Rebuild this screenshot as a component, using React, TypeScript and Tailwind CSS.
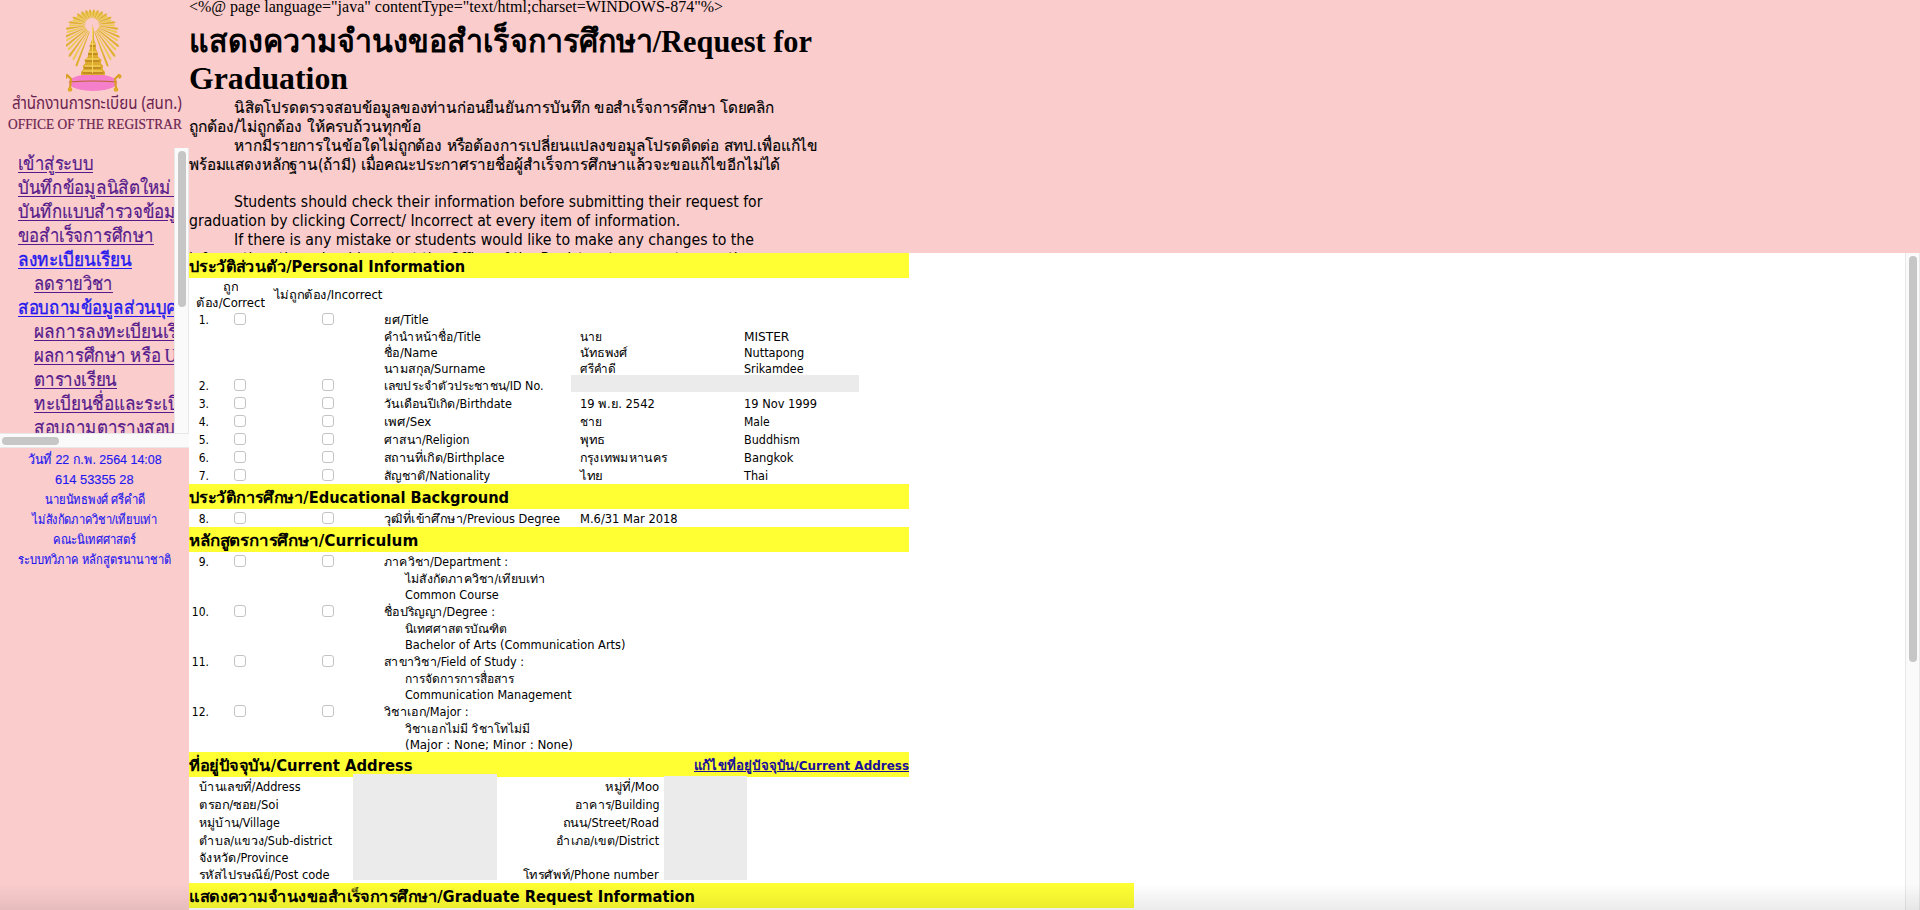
import { useLayoutEffect, useRef, useState, type ReactNode } from "react";

const tahoma = "font-['DejaVu_Sans_Condensed','DejaVu_Sans',sans-serif]";

type TProps = { w: number; children: ReactNode; className?: string; right?: boolean };

/* One line of text, condensed or widened to an exact width. */
function T({ w, children, className = "", right = false }: TProps) {
  const ref = useRef<HTMLSpanElement>(null);
  const [k, setK] = useState(1);
  useLayoutEffect(() => {
    if (ref.current) setK(w / ref.current.offsetWidth);
  }, [w]);
  return (
    <span className={`flex shrink-0 whitespace-nowrap ${right ? "justify-end" : ""} ${className}`} style={{ width: w }}>
      <span ref={ref} className={`shrink-0 ${right ? "origin-right" : "origin-left"}`} style={{ transform: `scaleX(${k})` }}>
        {children}
      </span>
    </span>
  );
}

/* Table text, which sits slightly below the middle of its row. */
function L(props: TProps) {
  return <T {...props} className="pt-[2px]" />;
}

const rays = Array.from({ length: 43 }, (_, i) => -159 + (i * 318) / 42);

function Emblem() {
  return (
    <svg width="58" height="84" viewBox="0 0 58 84" className="mt-[9px]">
      {rays.map((a, i) => {
        const len = 15 + 29 * Math.pow(Math.abs(a) / 159, 2) + (i % 2 ? -1 : 1);
        return (
          <polygon key={a} points={`-0.35,-7 0.35,-7 1.1,${-len + 2} 0,${-len} -1.1,${-len + 2}`} fill={i % 2 ? "#ecca55" : "#e0b030"} transform={`translate(26 16) rotate(${a})`} />
        );
      })}
      <ellipse cx="27" cy="73.5" rx="24" ry="8.5" fill="#f57fca" />
      <path d="M3 73Q27 71 51 73" stroke="#b8672e" strokeWidth="1.2" fill="none" />
      <path d="M26.5 15l1 5 .6 11 1.6 4 .3 5 1.8 4 .4 4 3.4 3-1 3 2.6 3-.6 3 2.4 3v3H15v-3l2.400-3-.6-3 2.600-3-1-3 3.400-3 .4-4 1.800-4 .3-5 1.600-4 .6-11z" fill="#dfab2c" />
      <path d="M23.500 37h6M22 45h9.500M19.500 52h14M18 59h17M16.500 64h21" stroke="#a06a16" strokeWidth="0.9" />
      <path d="M24 35h5M22.500 43h8M20 50h13M18.500 57h16M17 62h19" stroke="#f7db6b" strokeWidth="1.2" />
      <path d="M26.500 18v46" stroke="#f5d45a" strokeWidth="1" />
      <path d="M1 69q-3-2 0-3l4 4-1 9M53 69q3-2 0-3l-4 4 1 9" stroke="#dba023" strokeWidth="2.2" fill="none" />
      <circle cx="4" cy="80.500" r="2.300" fill="#e0a928" />
      <circle cx="50" cy="80.500" r="2.300" fill="#e0a928" />
    </svg>
  );
}

const nav: { text: string; w: number; sub?: boolean; blue?: boolean }[] = [
  { text: "เข้าสู่ระบบ", w: 75 },
  { text: "บันทึกข้อมูลนิสิตใหม่ และ", w: 188 },
  { text: "บันทึกแบบสำรวจข้อมูลนิสิต", w: 201 },
  { text: "ขอสำเร็จการศึกษา", w: 136 },
  { text: "ลงทะเบียนเรียน", w: 114, blue: true },
  { text: "ลดรายวิชา", w: 79, sub: true },
  { text: "สอบถามข้อมูลส่วนบุคคล", w: 182, blue: true },
  { text: "ผลการลงทะเบียนเรียน", w: 165, sub: true },
  { text: "ผลการศึกษา หรือ UNOFFICIAL", w: 230, sub: true },
  { text: "ตารางเรียน", w: 83, sub: true },
  { text: "ทะเบียนชื่อและระเบียน", w: 166, sub: true },
  { text: "สอบถามตารางสอบ", w: 141, sub: true },
];

const student: [string, number][] = [
  ["วันที่ 22 ก.พ. 2564 14:08", 134],
  ["614 53355 28", 79],
  ["นายนัทธพงศ์ ศรีคำดี", 100],
  ["ไม่สังกัดภาควิชา/เทียบเท่า", 125],
  ["คณะนิเทศศาสตร์", 83],
  ["ระบบทวิภาค หลักสูตรนานาชาติ", 153],
];

function Sidebar() {
  return (
    <aside className="flex w-[189px] shrink-0 flex-col bg-[#facccc]">
      <div className="flex h-[148px] flex-col items-center text-[#6b2350]">
        <Emblem />
        <div className="flex w-full flex-col pl-2">
          <T w={170} className="ml-1 h-[20px] text-[18px] leading-[21px] font-['Noto_Sans_Thai','Liberation_Sans',sans-serif]">สำนักงานการทะเบียน (สนท.)</T>
          <T w={174} className="h-[22px] text-[15.5px] leading-[22px] font-['Liberation_Serif',serif] [-webkit-text-stroke:0.2px]">OFFICE OF THE REGISTRAR</T>
        </div>
      </div>
      <div className="flex h-[285px]">
        <nav className="w-[174px] overflow-hidden pt-[4px] pl-[18px] font-['Liberation_Serif',serif] text-[19px]">
          {nav.map((n) => (
            <a key={n.text} className={`flex h-6 items-center leading-6 underline underline-offset-2 ${n.sub ? "pl-4" : ""} ${n.blue ? "text-[#2418ee] [-webkit-text-stroke:0.4px]" : "text-[#551a8b] [-webkit-text-stroke:0.2px]"}`}>
              <T w={n.w}>{n.text}</T>
            </a>
          ))}
        </nav>
        <div className="w-[15px] border-x border-[#e8e8e8] bg-[#fafafa] pt-[3px] pl-[3px]">
          <div className="h-[156px] w-2 rounded-full bg-[#c6c6c6]" />
        </div>
      </div>
      <div className="h-[15px] border-y border-[#e8e8e8] bg-[#fafafa] pt-[3px] pl-[2px]">
        <div className="h-2 w-[57px] rounded-full bg-[#c6c6c6]" />
      </div>
      <div className="flex flex-col items-center pt-[2px] font-['Liberation_Sans',sans-serif] text-[13px] leading-5 text-[#2418ee] [-webkit-text-stroke:0.15px]">
        {student.map(([t, w]) => (
          <T key={t} w={w}>{t}</T>
        ))}
      </div>
    </aside>
  );
}

const intro: { text: string; w: number; indent?: boolean; thai?: boolean }[] = [
  { text: "นิสิตโปรดตรวจสอบข้อมูลของท่านก่อนยืนยันการบันทึก ขอสำเร็จการศึกษา โดยคลิก", w: 540, indent: true, thai: true },
  { text: "ถูกต้อง/ไม่ถูกต้อง ให้ครบถ้วนทุกข้อ", w: 232, thai: true },
  { text: "หากมีรายการในข้อใดไม่ถูกต้อง หรือต้องการเปลี่ยนแปลงขอมูลโปรดติดต่อ สทป.เพื่อแก้ไข", w: 584, indent: true, thai: true },
  { text: "พร้อมแสดงหลักฐาน(ถ้ามี) เมื่อคณะประกาศรายชื่อผู้สำเร็จการศึกษาแล้วจะขอแก้ไขอีกไม่ได้", w: 591, thai: true },
  { text: "\u00a0", w: 4 },
  { text: "Students should check their information before submitting their request for", w: 528, indent: true },
  { text: "graduation by clicking Correct/ Incorrect at every item of information.", w: 491 },
  { text: "If there is any mistake or students would like to make any changes to the", w: 520, indent: true },
  { text: "information, they should contact the Office of the Registrar to request correction", w: 566 },
];

function Header() {
  return (
    <header className="h-[253px] overflow-hidden bg-[#facccc]">
      <div className="font-['Liberation_Serif',serif]">
        <T w={534} className="h-[14px] text-[16px] leading-[14px]">{'<%@ page language="java" contentType="text/html;charset=WINDOWS-874"%>'}</T>
        <h1 className="pt-[9px] text-[32px] font-bold">
          <T w={623} className="h-[37px] leading-[37px]">แสดงความจำนงขอสำเร็จการศึกษา/Request for</T>
          <T w={159} className="h-[36px] leading-[37px]">Graduation</T>
        </h1>
      </div>
      <div className={`pt-[2px] text-[15.5px] ${tahoma}`}>
        {intro.map((p) => (
          <T key={p.text} w={p.w} className={`h-[19px] leading-[19px] ${p.thai ? "pt-px [-webkit-text-stroke:0.15px]" : ""} ${p.indent ? "ml-[45px]" : ""}`}>{p.text}</T>
        ))}
      </div>
    </header>
  );
}

function Bar({ text, w, wide = false, children }: { text: string; w: number; wide?: boolean; children?: ReactNode }) {
  return (
    <div className={`flex h-[25px] items-center justify-between bg-[#ffff33] text-[15.5px] font-bold ${wide ? "w-[945px]" : "w-[720px]"}`}>
      <L w={w}>{text}</L>
      {children}
    </div>
  );
}

function Box() {
  return <span className="h-3 w-3 rounded-[3px] border border-[#c4c4c4] bg-white" />;
}

type Cell = [string, number];

function Row({ n, label, a, b }: { n: string; label: Cell; a?: Cell; b?: Cell }) {
  return (
    <div className="flex h-[18px] items-center">
      <span className="flex w-5 justify-end"><L right w={n.length > 2 ? 17 : 10}>{n}</L></span>
      <span className="flex w-[62px] pl-[25px]"><Box /></span>
      <span className="flex w-[113px] pl-[51px]"><Box /></span>
      <span className="w-[196px]"><L w={label[1]}>{label[0]}</L></span>
      <span className="w-[164px]">{a && <L w={a[1]}>{a[0]}</L>}</span>
      {b && <L w={b[1]}>{b[0]}</L>}
    </div>
  );
}

function NameRow({ label, a, b }: { label: Cell; a: Cell; b: Cell }) {
  return (
    <div className="flex h-4 items-center pl-[195px]">
      <span className="w-[196px]"><L w={label[1]}>{label[0]}</L></span>
      <span className="w-[164px]"><L w={a[1]}>{a[0]}</L></span>
      <L w={b[1]}>{b[0]}</L>
    </div>
  );
}

const personal: { n: string; label: Cell; a?: Cell; b?: Cell }[] = [
  { n: "2.", label: ["เลขประจำตัวประชาชน/ID No.", 159] },
  { n: "3.", label: ["วันเดือนปีเกิด/Birthdate", 128], a: ["19 พ.ย. 2542", 75], b: ["19 Nov 1999", 73] },
  { n: "4.", label: ["เพศ/Sex", 47], a: ["ชาย", 22], b: ["Male", 26] },
  { n: "5.", label: ["ศาสนา/Religion", 86], a: ["พุทธ", 25], b: ["Buddhism", 56] },
  { n: "6.", label: ["สถานที่เกิด/Birthplace", 121], a: ["กรุงเทพมหานคร", 87], b: ["Bangkok", 49] },
  { n: "7.", label: ["สัญชาติ/Nationality", 106], a: ["ไทย", 23], b: ["Thai", 24] },
];

const curriculum: { n: string; label: Cell; th: Cell; en: Cell }[] = [
  { n: "9.", label: ["ภาควิชา/Department :", 124], th: ["ไม่สังกัดภาควิชา/เทียบเท่า", 141], en: ["Common Course", 94] },
  { n: "10.", label: ["ชื่อปริญญา/Degree :", 111], th: ["นิเทศศาสตรบัณฑิต", 102], en: ["Bachelor of Arts (Communication Arts)", 220] },
  { n: "11.", label: ["สาขาวิชา/Field of Study :", 140], th: ["การจัดการการสื่อสาร", 109], en: ["Communication Management", 167] },
  { n: "12.", label: ["วิชาเอก/Major :", 85], th: ["วิชาเอกไม่มี วิชาโทไม่มี", 125], en: ["(Major : None; Minor : None)", 168] },
];

const address: { l: Cell; r?: Cell; short?: boolean }[] = [
  { l: ["บ้านเลขที่/Address", 102], r: ["หมู่ที่/Moo", 54] },
  { l: ["ตรอก/ซอย/Soi", 80], r: ["อาคาร/Building", 84] },
  { l: ["หมู่บ้าน/Village", 81], r: ["ถนน/Street/Road", 96] },
  { l: ["ตำบล/แขวง/Sub-district", 133], r: ["อำเภอ/เขต/District", 103] },
  { l: ["จังหวัด/Province", 90], short: true },
  { l: ["รหัสไปรษณีย์/Post code", 131], r: ["โทรศัพท์/Phone number", 136] },
];

function Form() {
  return (
    <main className={`relative flex-1 overflow-hidden text-[12px] leading-4 text-black ${tahoma}`}>
      <Bar text="ประวัติส่วนตัว/Personal Information" w={276} />
      <div className="flex h-8 items-center pt-px">
        <div className="flex w-[83px] flex-col items-center">
          <T w={15}>ถูก</T>
          <T w={69}>ต้อง/Correct</T>
        </div>
        <T w={108} className="ml-[2px]">ไม่ถูกต้อง/Incorrect</T>
      </div>
      <Row n="1." label={["ยศ/Title", 45]} />
      <NameRow label={["คำนำหน้าชื่อ/Title", 97]} a={["นาย", 22]} b={["MISTER", 45]} />
      <NameRow label={["ชื่อ/Name", 54]} a={["นัทธพงศ์", 48]} b={["Nuttapong", 60]} />
      <NameRow label={["นามสกุล/Surname", 101]} a={["ศรีคำดี", 36]} b={["Srikamdee", 60]} />
      {personal.map((p) => <Row key={p.n} {...p} />)}
      <Bar text="ประวัติการศึกษา/Educational Background" w={320} />
      <Row n="8." label={["วุฒิที่เข้าศึกษา/Previous Degree", 176]} a={["M.6/31 Mar 2018", 98]} />
      <Bar text="หลักสูตรการศึกษา/Curriculum" w={229} />
      {curriculum.map((c) => (
        <div key={c.n}>
          <Row n={c.n} label={c.label} />
          <div className="flex h-4 items-center pl-[216px]"><L w={c.th[1]}>{c.th[0]}</L></div>
          <div className="flex h-4 items-center pl-[216px]"><L w={c.en[1]}>{c.en[0]}</L></div>
        </div>
      ))}
      <Bar text="ที่อยู่ปัจจุบัน/Current Address" w={224}>
        <a className="text-[13px] text-[#1a0d9b] underline"><L right w={215}>แก้ไขที่อยู่ปัจจุบัน/Current Address</L></a>
      </Bar>
      {address.map((r) => (
        <div key={r.l[0]} className={`flex w-[470px] items-center justify-between pl-[10px] ${r.short ? "h-4" : "h-[18px]"}`}>
          <L w={r.l[1]}>{r.l[0]}</L>
          {r.r && <L right w={r.r[1]}>{r.r[0]}</L>}
        </div>
      ))}
      <Bar wide text="แสดงความจำนงขอสำเร็จการศึกษา/Graduate Request Information" w={506} />
      <div className="absolute top-[122px] left-[382px] h-[17px] w-[288px] bg-[#ebebeb]" />
      <div className="absolute top-[521px] left-[164px] h-[106px] w-[144px] bg-[#ebebeb]" />
      <div className="absolute top-[523px] left-[475px] h-[104px] w-[83px] bg-[#ebebeb]" />
    </main>
  );
}

export default function App() {
  return (
    <div className="relative flex h-[910px] w-[1920px] overflow-hidden bg-white">
      <Sidebar />
      <div className="flex flex-1 flex-col">
        <Header />
        <div className="flex h-[657px]">
          <Form />
          <div className="w-[15px] border-x border-[#e8e8e8] bg-[#fafafa] pt-[3px] pl-[3px]">
            <div className="h-[406px] w-2 rounded-full bg-[#c6c6c6]" />
          </div>
        </div>
      </div>
      <div className="pointer-events-none absolute inset-x-0 bottom-0 h-[26px] bg-linear-to-b from-black/0 to-black/8" />
    </div>
  );
}
